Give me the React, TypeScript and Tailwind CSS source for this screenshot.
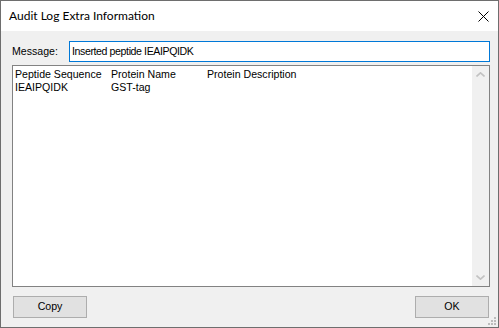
import React from 'react';

const rows = [
  ['Peptide Sequence', 'Protein Name', 'Protein Description'],
  ['IEAIPQIDK', 'GST-tag', ''],
];

const CloseIcon = () => (
  <svg width="11" height="11" viewBox="0 0 11 11">
    <path d="M0.5 0.5 L10.5 10.5 M10.5 0.5 L0.5 10.5" stroke="#000" strokeWidth="1" fill="none" />
  </svg>
);

const Chevron = ({ up }: { up: boolean }) => (
  <svg width="9" height="5" viewBox="0 0 9 5">
    <path d={up ? 'M0.5 4.5 L4.5 0.8 L8.5 4.5' : 'M0.5 0.5 L4.5 4.2 L8.5 0.5'} stroke="#c2c2c2" strokeWidth="1.6" fill="none" />
  </svg>
);

const Grip = () => (
  <svg width="9" height="9" viewBox="0 0 9 9">
    <rect x="6" y="0" width="2" height="2" fill="#bcbcbc" />
    <rect x="3" y="3" width="2" height="2" fill="#bcbcbc" />
    <rect x="6" y="3" width="2" height="2" fill="#bcbcbc" />
    <rect x="0" y="6" width="2" height="2" fill="#bcbcbc" />
    <rect x="3" y="6" width="2" height="2" fill="#bcbcbc" />
    <rect x="6" y="6" width="2" height="2" fill="#bcbcbc" />
  </svg>
);

export default function App() {
  return (
    <div className="w-[499px] h-[328px] border border-[#6e6e6e] bg-[#f0f0f0] flex flex-col text-black" style={{ fontFamily: '"Liberation Sans", Arial, sans-serif' }}>
      {/* title bar */}
      <div className="h-[30px] bg-white flex items-center justify-between pl-[8px] pr-[9px] shrink-0">
        <span className="text-[12px]" style={{ fontFamily: 'Lato, "Noto Sans", sans-serif' }}>Audit Log Extra Information</span>
        <CloseIcon />
      </div>

      <div className="relative flex-1 flex flex-col pt-[10px] pl-[11px] pr-[8px]">
        <div className="flex items-center h-[21px]">
          <span className="text-[10.6px] w-[57px]">Message:</span>
          <div className="flex-1 h-[21px] border border-[#0078d7] bg-white flex items-center pl-[2px] text-[10.6px] tracking-[-0.4px]">
            Inserted peptide IEAIPQIDK
          </div>
        </div>

        <div className="mt-[3px] h-[222px] border border-[#828282] bg-white flex">
          <div className="flex-1 pl-[2px] pt-[2px] text-[10.6px] leading-[13px]">
            {rows.map((r, i) => (
              <div key={i} className="flex">
                <span className="w-[96px]">{r[0]}</span>
                <span className="w-[96px]">{r[1]}</span>
                <span>{r[2]}</span>
              </div>
            ))}
          </div>
          <div className="w-[17px] bg-[#f0f0f0] flex flex-col items-center justify-between py-[6px]">
            <Chevron up />
            <Chevron up={false} />
          </div>
        </div>

        <div className="mt-[9px] flex justify-between pl-[1px] pr-[1px]">
          <button className="w-[74px] h-[22px] bg-[#e1e1e1] border border-[#adadad] text-[10.6px]">Copy</button>
          <button className="w-[74px] h-[22px] bg-[#e1e1e1] border border-[#adadad] text-[10.6px]">OK</button>
        </div>

        <div className="absolute right-[1px] bottom-[1px]">
          <Grip />
        </div>
      </div>
    </div>
  );
}
